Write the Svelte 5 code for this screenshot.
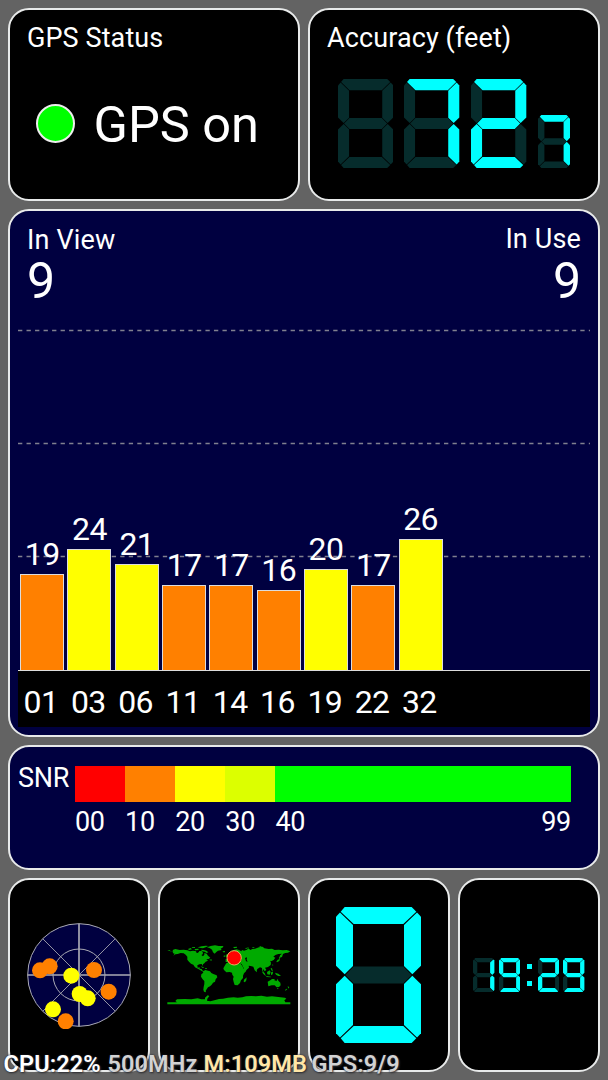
<script>
  const SEGMENTS = {
    a: '10.2,0 89,0 94.5,5.5 79.2,20 20.8,20 5.5,5.5',
    f: '0,11.5 4.7,6.5 20,21.2 20,69.5 10.2,79 0,69',
    b: '100,11.5 95.3,6.5 80,21.2 80,69.5 89.8,79 100,69',
    g: '11,80 20.8,70 79.2,70 89,80 79.2,90 20.8,90',
    e: '0,148.5 4.7,153.5 20,138.8 20,90.5 10.2,81 0,91',
    c: '100,148.5 95.3,153.5 80,138.8 80,90.5 89.8,81 100,91',
    d: '10.2,160 89,160 94.5,154.5 79.2,140 20.8,140 5.5,154.5'
  };
  const LIT = { ' ': '', 0: 'abcdef', 1: 'bc', 2: 'abged', 7: 'abc', 9: 'abcdfg' };

  const satellites = [
    { id: '01', snr: 19 },
    { id: '03', snr: 24 },
    { id: '06', snr: 21 },
    { id: '11', snr: 17 },
    { id: '14', snr: 17 },
    { id: '16', snr: 16 },
    { id: '19', snr: 20 },
    { id: '22', snr: 17 },
    { id: '32', snr: 26 }
  ];
  const UNIT = 5.03;
  const levelColor = (snr) => (snr < 20 ? '#ff8000' : '#ffff00');

  const scale = [
    { label: '00', span: 10, color: '#ff0000' },
    { label: '10', span: 10, color: '#ff8000' },
    { label: '20', span: 10, color: '#ffff00' },
    { label: '30', span: 10, color: '#dcff00' },
    { label: '40', span: 59, color: '#00ff00' }
  ];

  const sky = [
    [120, 300, 0], [149, 288, 0], [214, 316, 1], [282, 299, 0], [326, 364, 0],
    [239, 371, 1], [263, 384, 1], [159, 417, 1], [197, 453, 0]
  ];
</script>

{#snippet digit(ch, cls)}
  <svg class={cls} viewBox="0 0 100 160" preserveAspectRatio="none">
    {#each Object.entries(SEGMENTS) as [name, points]}
      <polygon {points} fill={LIT[ch].includes(name) ? '#00ffff' : '#062c2c'} />
    {/each}
  </svg>
{/snippet}

<main>
  <div class="row top">
    <section class="card status">
      <h2>GPS Status</h2>
      <div class="state"><i class="lamp"></i><span>GPS on</span></div>
    </section>
    <section class="card accuracy">
      <h2>Accuracy (feet)</h2>
      <div class="digits">
        {@render digit(' ', 'large')}
        {@render digit('7', 'large')}
        {@render digit('2', 'large')}
        {@render digit('7', 'small')}
      </div>
    </section>
  </div>

  <section class="card navy view">
    <div class="counts">
      <div><p class="cap">In View</p><p class="num">9</p></div>
      <div class="right"><p class="cap use">In Use</p><p class="num">9</p></div>
    </div>
    <div class="plot">
      <svg class="grid" viewBox="0 0 572 342">
        {#each [2.5, 115.5, 228.5] as y}
          <line x1="0" x2="572" y1={y} y2={y} />
        {/each}
      </svg>
      <div class="bars">
        {#each satellites as s}
          <div class="col">
            <span>{s.snr}</span>
            <div class="bar" style="height:{s.snr * UNIT}px;background:{levelColor(s.snr)}"></div>
          </div>
        {/each}
      </div>
    </div>
    <div class="ids">
      {#each satellites as s}<span>{s.id}</span>{/each}
    </div>
  </section>

  <section class="card navy snr">
    <span class="name">SNR</span>
    <div class="scale">
      {#each scale as step}
        <div class="step" style="flex-grow:{step.span}">
          <div class="swatch" style="background:{step.color}"></div>
          <div class="marks"><span>{step.label}</span>{#if step.label === '40'}<span>99</span>{/if}</div>
        </div>
      {/each}
    </div>
  </section>

  <div class="row bottom">
    <section class="card">
      <svg class="radar" width="108" height="108" viewBox="75 152 324 324">
        <circle cx="237" cy="314" r="154" fill="#000040" stroke="#aaaab4" stroke-width="3" />
        <g fill="none" stroke="#aaaab4">
          <circle cx="237" cy="314" r="78" stroke-width="3" />
          <path d="M237 160V468M83 314H391" stroke-width="5" />
          <path d="M128 205L346 423M346 205L128 423" stroke-width="2.6" />
        </g>
        {#each sky as [x, y, strong]}
          <circle cx={x} cy={y} r="24" fill={strong ? '#ffff00' : '#ff8000'} />
        {/each}
      </svg>
    </section>
    <section class="card">
      <svg class="map" width="124" height="60" viewBox="35 47 372 180">
        <g fill="#00aa00">
          <path d="M36 62H42L47 66H53L52 62L60 59L73 62L85 61L96 63L104 66L113 64L122 66L124 71L130 70L132 65L139 65L143 70L142 75L138 77L143 81L147 76L147 71L154 73L158 79L165 85L160 89L153 90L158 94L151 97L147 102L143 105V110L139 104L132 105L126 108L127 115L133 114L133 118L139 119L142 124L149 126L145 128L138 124L129 119L119 114L114 106L107 103L101 97L96 91V82L91 76L85 72L76 71L67 74L60 75L54 79L58 73L52 71L54 67L45 66Z" />
          <path d="M98 59L106 56L110 60L101 62ZM109 54L119 53L119 56L111 56ZM118 59L129 58L130 62L119 63ZM127 54L139 51L151 49L159 50L151 54L143 57L136 56ZM137 61L145 62L153 64L159 69L154 71L148 67L140 66ZM128 69L134 70L133 75L129 74ZM162 91L169 90V94L164 93Z" />
          <path d="M155 54L166 50L179 48L190 50H204L203 54L196 58L199 62L188 64L183 68L178 73L173 69L170 61L164 57Z" />
          <path d="M136 111L143 113L147 116L141 115ZM149 117H155V119H149Z" />
          <path d="M145 125L150 122L158 124L164 126L168 131L174 134L184 138L186 144L181 150L179 157L173 160L169 166L164 171L158 174L155 178L151 184L152 189L146 187L144 181L145 173L147 164V155L142 150L137 142L138 135L143 131Z" />
          <path d="M210 106L213 102L219 99L228 97L235 98L236 101L243 104L247 101L256 103L261 110L265 118L274 119L272 126L266 132L263 139V146L257 153L254 161L247 168L238 167L235 158L233 149L235 142L231 136L230 130L223 128L213 129L206 122L204 117Z" />
          <path d="M271 147L274 144L273 153L269 159L265 157L266 151Z" />
          <path d="M211 98L211 89H219L216 83L223 80L229 76L234 74L231 70L227 72L228 66L235 62L244 60L251 62L258 66L260 62L266 64L275 61L279 57L285 62L291 59L299 58L311 54L322 52L327 57L340 59L350 58L358 62L370 61L382 63L394 62L405 66L398 70L390 71L383 74L380 83L373 85L374 78L380 73L369 74L360 77L354 82L360 85L355 92L347 96L344 94L347 100L346 107L338 113L329 115L333 122L328 126L324 119L323 125L330 135L326 135L321 125L320 116L314 114L306 119L303 127L298 123L294 112L286 110L280 109L281 115L274 121L268 123L263 112L259 104L249 101L248 96L255 95L260 91L253 89L248 92L249 98L244 100L240 94L236 91L241 98L238 100L232 94L225 94L220 98Z" />
          <path d="M212 77L216 73L219 80L212 84ZM205 79L210 78V82H205ZM202 66L209 65V69L203 69ZM233 53L245 52V55L237 57ZM268 59L274 55L282 54L274 58ZM291 54L297 54V56H291ZM313 50L320 52L313 54Z" />
          <path d="M319 127L325 130L330 136L333 140L327 137ZM333 140L347 142L346 144L333 143ZM335 128L343 123L346 128L343 136L336 135ZM347 129L353 128V131L350 137L347 136ZM346 116L350 117L353 127L348 123ZM359 130L369 133L377 140L369 140L362 136ZM302 123L305 126L303 129ZM352 104L354 108L351 109ZM363 97L367 91L374 89L372 95L365 99ZM372 81L375 86L371 90Z" />
          <path d="M337 157L345 153L350 149H358L357 153L364 155L366 148L369 154L375 160L376 168L371 173L364 174L358 168L349 168L339 171ZM365 176L370 176L367 180ZM397 171L402 173L399 178ZM394 178L396 179L391 184L389 182Z" />
          <path d="M36 219H65L60 215L65 210L88 209L108 210L127 207L138 210H149V205L157 198L162 200L156 208L155 214L165 216L180 212L191 209L203 208L218 205L235 204L247 205L261 204L272 201L288 200L302 201L318 199L335 202L350 201L369 203L389 205L393 208L387 213L390 219H405V225H36Z" />
        </g>
        <path d="M269 86L275 84L274 91L277 97L272 96Z" fill="#000" />
        <circle cx="236.500" cy="85.500" r="21.500" fill="#ff0000" stroke="#e8b060" stroke-width="3" />
      </svg>
    </section>
    <section class="card">{@render digit('0', 'huge')}</section>
    <section class="card">
      <div class="clock">
        {@render digit('1', 'tiny')}
        {@render digit('9', 'tiny')}
        <div class="colon"><i></i><i></i></div>
        {@render digit('2', 'tiny')}
        {@render digit('9', 'tiny')}
      </div>
    </section>
  </div>

  <div class="overlay">
    <span class="cpu">CPU:22%</span><span class="mhz">500MHz</span><span class="mem">M:109MB</span><span class="sat">GPS:9/9</span>
  </div>
</main>

<style>
  :global(body) {
    margin: 0;
    background: #636363;
  }
  main {
    position: relative;
    box-sizing: border-box;
    width: 608px;
    height: 1080px;
    padding: 8px;
    display: grid;
    grid-template-rows: 193px 528px 125px 194px;
    row-gap: 8px;
    overflow: hidden;
    background: #636363;
    color: #fff;
    font-family: Roboto, sans-serif;
  }
  h2, p {
    margin: 0;
    font-weight: 400;
  }
  .row {
    display: grid;
    column-gap: 8px;
  }
  .top {
    grid-template-columns: 1fr 1fr;
  }
  .bottom {
    grid-template-columns: repeat(4, 1fr);
  }
  .card {
    box-sizing: border-box;
    min-width: 0;
    border: 2px solid #e8eaea;
    border-radius: 21px;
    background: #000;
  }
  .navy {
    background: #000040;
  }
  h2 {
    padding: 13px 0 0 17px;
    font-size: 27px;
    letter-spacing: 0.1px;
    line-height: 30px;
    white-space: nowrap;
  }
  .state {
    display: flex;
    align-items: center;
    margin-top: 42px;
    padding-left: 26px;
    font-size: 50.5px;
    line-height: 60px;
    white-space: nowrap;
  }
  .lamp {
    box-sizing: border-box;
    width: 39px;
    height: 39px;
    margin: 0 18.5px 3px 0;
    border: 2px solid #eee;
    border-radius: 50%;
    background: #00ff00;
  }
  .digits {
    display: flex;
    align-items: flex-end;
    gap: 11.5px;
    padding: 26px 0 0 27.700px;
  }
  .large {
    width: 55.3px;
    height: 89px;
  }
  .small {
    width: 32px;
    height: 53px;
  }
  .view {
    display: flex;
    flex-direction: column;
    padding: 14px 8px 8px;
  }
  .counts {
    display: flex;
    justify-content: space-between;
    height: 104px;
    padding: 0 9px;
  }
  .right {
    text-align: right;
  }
  .cap {
    font-size: 27px;
    letter-spacing: 0.15px;
    line-height: 30px;
  }
  .use {
    position: relative;
    top: -1px;
  }
  .num {
    font-size: 50px;
    line-height: 52px;
  }
  .plot {
    display: grid;
    height: 342px;
    border-bottom: 1px solid #ddd;
  }
  .grid, .bars {
    grid-area: 1 / 1;
  }
  .grid {
    width: 572px;
    height: 342px;
  }
  .grid line {
    stroke: #80808f;
    stroke-width: 1.6;
    stroke-dasharray: 4.3 4.22;
  }
  .bars {
    display: flex;
    align-items: flex-end;
    gap: 3.3px;
    padding-left: 2.2px;
  }
  .col {
    display: flex;
    flex-direction: column;
    align-items: center;
    width: 44px;
    font-size: 32px;
    letter-spacing: -0.6px;
    line-height: 40px;
  }
  .bar {
    box-sizing: border-box;
    width: 44px;
    border: 1px solid #ddd;
    border-bottom: 0;
  }
  .ids {
    display: flex;
    gap: 3.3px;
    height: 56px;
    padding-left: 1px;
    background: #000;
    font-size: 32px;
    letter-spacing: -0.6px;
    line-height: 63px;
  }
  .ids span {
    width: 44px;
    text-align: center;
  }
  .snr {
    display: flex;
    padding: 19px 27px 0 8px;
    font-size: 27px;
    letter-spacing: -0.3px;
  }
  .name {
    width: 57px;
    line-height: 24px;
  }
  .scale {
    display: flex;
    flex: 1;
  }
  .step {
    flex-basis: 0;
    min-width: 0;
  }
  .swatch {
    height: 36px;
  }
  .marks {
    display: flex;
    justify-content: space-between;
    line-height: 41px;
  }
  .bottom .card {
    display: flex;
    align-items: center;
    justify-content: center;
  }
  .huge {
    width: 85px;
    height: 136px;
    margin-right: 1px;
  }
  .clock {
    display: flex;
    align-items: center;
  }
  .tiny {
    width: 21.400px;
    height: 34.400px;
  }
  .tiny + .tiny {
    margin-left: 4px;
  }
  .colon {
    display: flex;
    flex-direction: column;
    gap: 12px;
    margin: 0 6px 0 7px;
  }
  .colon i {
    width: 5px;
    height: 5px;
    background: #00ffff;
  }
  .overlay {
    position: absolute;
    left: 3.5px;
    top: 1051px;
    display: flex;
    font-size: 23.5px;
    font-weight: 600;
    letter-spacing: 0.1px;
    line-height: 26px;
    white-space: nowrap;
    text-shadow: 0 0 2px #223, 1px 1px 2px #333;
  }
  .cpu {
    width: 104px;
  }
  .mhz {
    width: 96px;
    color: #d2d2d2;
  }
  .mem {
    width: 108px;
    color: #ffe6a6;
  }
  .sat {
    color: #d2d2d2;
  }
</style>
